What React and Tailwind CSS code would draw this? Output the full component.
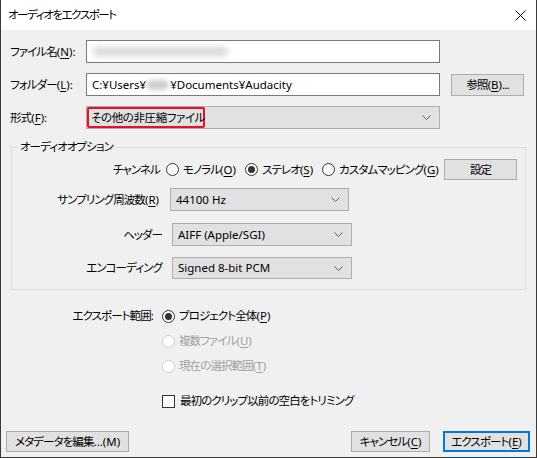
import React from 'react';

const FONT = "font-['Noto_Sans','Noto_Sans_CJK_JP',sans-serif] [font-feature-settings:'palt']";

function Chevron({ className = '' }) {
  return (
    <svg width="9" height="5" viewBox="0 0 9 5" className={className}>
      <path d="M0.5 0.5 L4.5 4.5 L8.5 0.5" fill="none" stroke="#5a5a5a" strokeWidth="1" />
    </svg>
  );
}

function Key({ k }) {
  return (
    <span className="tracking-normal">
      (<u className="underline-offset-2">{k}</u>)
    </span>
  );
}

function Radio({ checked, disabled, children }) {
  return (
    <div className={`flex items-center gap-[4px] ${disabled ? 'text-[#a0a0a0]' : 'text-black'}`}>
      <span
        className={`flex h-[13px] w-[13px] shrink-0 items-center justify-center rounded-full border bg-white ${
          disabled ? 'border-[#cccccc] bg-[#f0f0f0]' : 'border-[#333333]'
        }`}
      >
        {checked && <span className="h-[7px] w-[7px] rounded-full bg-[#333333]" />}
      </span>
      <span>{children}</span>
    </div>
  );
}

function Select({ children, className = '' }) {
  return (
    <div
      className={`flex items-center justify-between border border-[#adadad] bg-[#e1e1e1] pl-[5px] pr-[8px] tracking-normal ${className}`}
    >
      <span>{children}</span>
      <Chevron />
    </div>
  );
}

function Button({ children, className = '' }) {
  return (
    <div className={`flex items-center justify-center border border-[#adadad] bg-[#e1e1e1] ${className}`}>
      {children}
    </div>
  );
}

export default function App() {
  return (
    <div
      className={`flex h-[458px] w-[537px] flex-col whitespace-nowrap border-x border-b border-[#3a3a3a] bg-[#f0f0f0] text-[11.5px] leading-[16px] tracking-[-0.9px] text-black ${FONT}`}
    >
      {/* title bar */}
      <div className="flex h-[30px] shrink-0 items-center justify-between bg-white pl-[7px] pr-[10px]">
        <span className="tracking-[-1.4px]">オーディオをエクスポート</span>
        <svg width="11" height="11" viewBox="0 0 11 11">
          <path d="M0.5 0.5 L10.5 10.5 M10.5 0.5 L0.5 10.5" stroke="#000" strokeWidth="1" />
        </svg>
      </div>

      {/* file name */}
      <div className="mt-[10px] flex h-[23px] items-center pl-[9px]">
        <span className="w-[76px]">
          ファイル名<Key k="N" />:
        </span>
        <div className="flex h-[23px] w-[354px] items-center border border-[#7a7a7a] bg-white pl-[6px]">
          <div className="h-[9px] w-[135px] rounded-full bg-[#d8d8d8] blur-[3px]" />
        </div>
      </div>

      {/* folder */}
      <div className="mt-[10px] flex h-[23px] items-center pl-[9px]">
        <span className="w-[76px]">
          フォルダー<Key k="L" />:
        </span>
        <div className="flex h-[23px] w-[354px] items-center border border-[#7a7a7a] bg-white pl-[5px] tracking-normal">
          <span>C:¥Users¥</span>
          <div className="mx-[1px] h-[10px] w-[22px] rounded-full bg-[#cfcfcf] blur-[2px]" />
          <span>¥Documents¥Audacity</span>
        </div>
        <Button className="ml-[11px] h-[22px] w-[73px]">
          <span>
            参照<Key k="B" />...
          </span>
        </Button>
      </div>

      {/* format */}
      <div className="mt-[10px] flex h-[23px] items-center pl-[9px]">
        <span className="w-[76px]">
          形式<Key k="F" />:
        </span>
        <div className="flex h-[23px] w-[354px] items-center justify-between border border-[#adadad] bg-[#e1e1e1] pr-[8px]">
          <span className="flex h-[21px] w-[118px] items-center rounded-[2px] border-2 border-[#e81123] pl-[2px] tracking-[-0.4px]">
            その他の非圧縮ファイル
          </span>
          <Chevron />
        </div>
      </div>

      {/* audio options group */}
      <fieldset className="ml-[10px] mt-[10px] h-[151px] w-[515px] border border-[#dcdcdc] pl-0 pr-0">
        <legend className="ml-[5px] px-[3px]">オーディオオプション</legend>

        <div className="mt-[4px] flex h-[21px] items-center">
          <span className="w-[148px] text-right">チャンネル</span>
          <div className="ml-[6px] flex w-[277px] shrink-0 items-center gap-[9px]">
            <Radio>
              モノラル<Key k="O" />
            </Radio>
            <Radio checked>
              ステレオ<Key k="S" />
            </Radio>
            <Radio>
              カスタムマッピング<Key k="G" />
            </Radio>
          </div>
          <Button className="ml-[1px] h-[21px] w-[73px] shrink-0">設定</Button>
        </div>

        <div className="mt-[8px] flex h-[23px] items-center">
          <span className="w-[147px] text-right">
            サンプリング周波数<Key k="R" />
          </span>
          <Select className="ml-[11px] h-[23px] w-[179px]">44100 Hz</Select>
        </div>

        <div className="mt-[12px] flex h-[23px] items-center">
          <span className="w-[150px] text-right">ヘッダー</span>
          <Select className="ml-[10px] h-[23px] w-[180px]">AIFF (Apple/SGI)</Select>
        </div>

        <div className="mt-[11px] flex h-[22px] items-center">
          <span className="w-[150px] text-right">エンコーディング</span>
          <Select className="ml-[10px] h-[22px] w-[180px]">Signed 8-bit PCM</Select>
        </div>
      </fieldset>

      {/* export range */}
      <div className="mt-[18px] flex items-start">
        <span className="w-[152px] text-right">エクスポート範囲:</span>
        <div className="ml-[9px] flex flex-col gap-[9px]">
          <Radio checked>
            プロジェクト全体<Key k="P" />
          </Radio>
          <Radio disabled>
            複数ファイル<Key k="U" />
          </Radio>
          <Radio disabled>
            現在の選択範囲<Key k="T" />
          </Radio>
        </div>
      </div>

      <div className="ml-[161px] mt-[19px] flex items-center gap-[5px]">
        <span className="h-[13px] w-[13px] border border-[#333333] bg-white" />
        <span>最初のクリップ以前の空白をトリミング</span>
      </div>

      {/* bottom buttons */}
      <div className="mt-auto mb-[5px] flex h-[21px] items-center pl-[5px] pr-[6px]">
        <Button className="h-[21px] w-[123px]">
          <span>
            メタデータを編集<span className="tracking-normal">...(M)</span>
          </span>
        </Button>
        <Button className="ml-auto h-[21px] w-[79px]">
          <span>
            キャンセル<Key k="C" />
          </span>
        </Button>
        <div className="ml-[13px] flex h-[21px] w-[87px] items-center justify-center border-2 border-[#0078d7] bg-[#e1e1e1]">
          <span>
            エクスポート<Key k="E" />
          </span>
        </div>
      </div>
    </div>
  );
}
